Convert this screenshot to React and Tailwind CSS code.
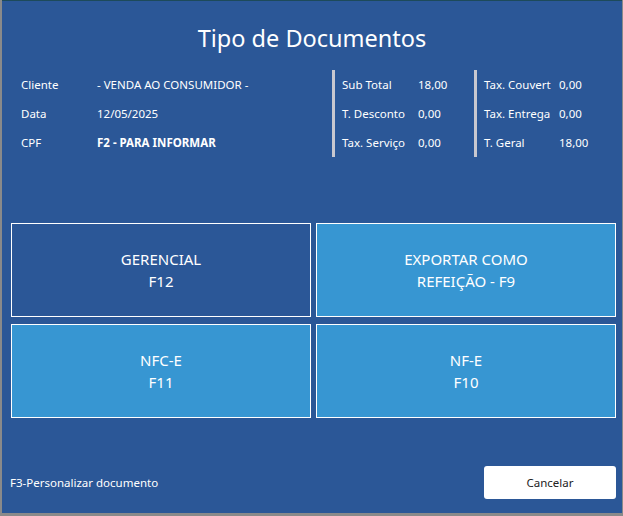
export default function App() {
  const left = [
    ['Cliente', '- VENDA AO CONSUMIDOR -', false],
    ['Data', '12/05/2025', false],
    ['CPF', 'F2 - PARA INFORMAR', true],
  ]
  const mid = [
    ['Sub Total', '18,00'],
    ['T. Desconto', '0,00'],
    ['Tax. Serviço', '0,00'],
  ]
  const right = [
    ['Tax. Couvert', '0,00'],
    ['Tax. Entrega', '0,00'],
    ['T. Geral', '18,00'],
  ]
  const botoes = [
    ['GERENCIAL', 'F12', 'bg-[#2b5797]'],
    ['EXPORTAR COMO', 'REFEIÇÃO - F9', 'bg-[#3796d2]'],
    ['NFC-E', 'F11', 'bg-[#3796d2]'],
    ['NF-E', 'F10', 'bg-[#3796d2]'],
  ]

  return (
    <div className="w-[623px] h-[516px] bg-[#8a8a8a] pl-[2px] pr-[1px] pb-[3px] font-['Noto_Sans',sans-serif]">
      <div className="h-full bg-[#2b5797] border-t border-[#1d4a5a] flex flex-col text-white">
        <h1 className="text-center text-[23.5px] leading-[32px] mt-[21px]">Tipo de Documentos</h1>

        <div className="flex mt-[16px] text-[11.5px] text-white">
          <div className="w-[330px] pl-[19px]">
            {left.map(([k, v, bold]) => (
              <div key={k} className="flex h-[29px] items-center">
                <span className="w-[76px]">{k}</span>
                <span className={bold ? 'font-bold' : ''}>{v}</span>
              </div>
            ))}
          </div>
          <div className="w-[3px] bg-[#c8c8d0]" />
          <div className="w-[139px] pl-[7px]">
            {mid.map(([k, v]) => (
              <div key={k} className="flex h-[29px] items-center">
                <span className="w-[76px]">{k}</span>
                <span>{v}</span>
              </div>
            ))}
          </div>
          <div className="w-[3px] bg-[#c8c8d0]" />
          <div className="pl-[7px]">
            {right.map(([k, v]) => (
              <div key={k} className="flex h-[29px] items-center">
                <span className="w-[75px]">{k}</span>
                <span>{v}</span>
              </div>
            ))}
          </div>
        </div>

        <div className="grid grid-cols-[300px_300px] grid-rows-[94px_94px] gap-x-[5px] gap-y-[7px] ml-[9px] mt-[66px]">
          {botoes.map(([a, b, bg]) => (
            <button
              key={a}
              type="button"
              className={`${bg} border border-white flex flex-col items-center justify-center text-[15px] leading-[22px] text-white`}
            >
              <span>{a}</span>
              <span>{b}</span>
            </button>
          ))}
        </div>

        <div className="mt-auto mb-[14px] flex items-center justify-between pl-[8px] pr-[6px]">
          <span className="text-[11.5px]">F3-Personalizar documento</span>
          <button
            type="button"
            className="w-[132px] h-[33px] rounded-[3px] bg-white text-[#222] text-[11.5px]"
          >
            Cancelar
          </button>
        </div>
      </div>
    </div>
  )
}
